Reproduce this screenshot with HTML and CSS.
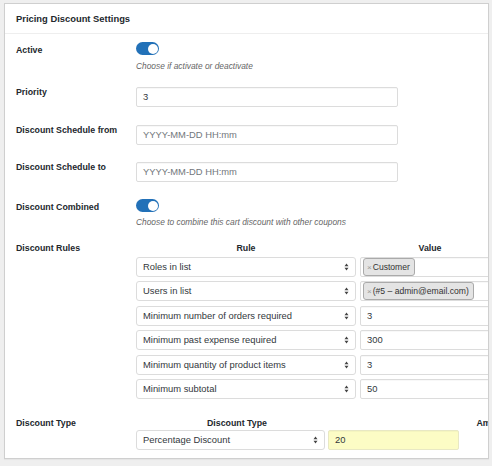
FILE: index.html
```html
<!DOCTYPE html>
<html>
<head>
<meta charset="utf-8">
<link rel="stylesheet" href="styles.css">
</head>
<body>
<div class="panel">
  <div class="panel-head">Pricing Discount Settings</div>
  <div class="panel-body">
    <div class="field f-active">
      <div class="label label-toggle">Active</div>
      <div class="control">
        <span class="toggle"><span class="knob"></span></span>
        <p class="desc">Choose if activate or deactivate</p>
      </div>
    </div>
    <div class="field f-priority">
      <div class="label">Priority</div>
      <div class="control"><div class="input wide">3</div></div>
    </div>
    <div class="field f-from">
      <div class="label">Discount Schedule from</div>
      <div class="control"><div class="input wide placeholder">YYYY-MM-DD HH:mm</div></div>
    </div>
    <div class="field f-to">
      <div class="label">Discount Schedule to</div>
      <div class="control"><div class="input wide placeholder">YYYY-MM-DD HH:mm</div></div>
    </div>
    <div class="field f-combined">
      <div class="label label-toggle">Discount Combined</div>
      <div class="control">
        <span class="toggle"><span class="knob"></span></span>
        <p class="desc desc2">Choose to combine this cart discount with other coupons</p>
      </div>
    </div>
    <div class="field f-rules">
      <div class="label label-head">Discount Rules</div>
      <div class="control">
        <div class="rules">
          <div class="th th-rule">Rule</div>
          <div class="th th-value">Value</div>
          <div class="select">Roles in list<svg class="arrow" width="5" height="8" viewBox="0 0 5 8"><path d="M0.5 3.2 L2.5 0.6 L4.5 3.2 Z M0.5 4.8 L2.5 7.4 L4.5 4.8 Z" fill="#444"/></svg></div>
          <div class="input value"><span class="chip"><span class="x">×</span>Customer</span></div>
          <div class="select">Users in list<svg class="arrow" width="5" height="8" viewBox="0 0 5 8"><path d="M0.5 3.2 L2.5 0.6 L4.5 3.2 Z M0.5 4.8 L2.5 7.4 L4.5 4.8 Z" fill="#444"/></svg></div>
          <div class="input value"><span class="chip"><span class="x">×</span>(#5 – admin@email.com)</span></div>
          <div class="select">Minimum number of orders required<svg class="arrow" width="5" height="8" viewBox="0 0 5 8"><path d="M0.5 3.2 L2.5 0.6 L4.5 3.2 Z M0.5 4.8 L2.5 7.4 L4.5 4.8 Z" fill="#444"/></svg></div>
          <div class="input value">3</div>
          <div class="select">Minimum past expense required<svg class="arrow" width="5" height="8" viewBox="0 0 5 8"><path d="M0.5 3.2 L2.5 0.6 L4.5 3.2 Z M0.5 4.8 L2.5 7.4 L4.5 4.8 Z" fill="#444"/></svg></div>
          <div class="input value">300</div>
          <div class="select">Minimum quantity of product items<svg class="arrow" width="5" height="8" viewBox="0 0 5 8"><path d="M0.5 3.2 L2.5 0.6 L4.5 3.2 Z M0.5 4.8 L2.5 7.4 L4.5 4.8 Z" fill="#444"/></svg></div>
          <div class="input value">3</div>
          <div class="select">Minimum subtotal<svg class="arrow" width="5" height="8" viewBox="0 0 5 8"><path d="M0.5 3.2 L2.5 0.6 L4.5 3.2 Z M0.5 4.8 L2.5 7.4 L4.5 4.8 Z" fill="#444"/></svg></div>
          <div class="input value">50</div>
        </div>
      </div>
    </div>
    <div class="field f-type">
      <div class="label label-head">Discount Type</div>
      <div class="control">
        <div class="type-head">
          <div class="th th-type">Discount Type</div>
          <div class="th th-amount">Amount</div>
        </div>
        <div class="type-row">
          <div class="select select-type">Percentage Discount<svg class="arrow" width="5" height="8" viewBox="0 0 5 8"><path d="M0.5 3.2 L2.5 0.6 L4.5 3.2 Z M0.5 4.8 L2.5 7.4 L4.5 4.8 Z" fill="#444"/></svg></div>
          <div class="input amount">20</div>
        </div>
      </div>
    </div>
  </div>
</div>
</body>
</html>
```

FILE: styles.css
```css
* { box-sizing: border-box; }
html, body { margin: 0; padding: 0; }
body {
  background: #efefef;
  font-family: "Liberation Sans", Arial, sans-serif;
  color: #23282d;
  width: 492px;
  height: 466px;
  overflow: hidden;
  padding: 3px 3px 0 4px;
}
.panel {
  background: #fff;
  border: 1px solid #cfcfcf;
  height: 456px;
  overflow: hidden;
  box-shadow: 0 1px 1px rgba(0,0,0,0.04);
}
.panel-head {
  height: 30px;
  border-bottom: 1px solid #eeeeee;
  padding: 0 11px;
  font-size: 9.4px;
  font-weight: bold;
  line-height: 29px;
  color: #23282d;
}
.panel-body { padding-left: 11px; }
.field {
  display: grid;
  grid-template-columns: 120px 1fr;
}
.label {
  font-size: 8.8px;
  font-weight: bold;
  line-height: 11px;
  color: #23282d;
  white-space: nowrap;
}
.label-toggle { padding-top: 3px; }
.label-head { line-height: 12px; }
.control { min-width: 0; }
.f-active { margin-top: 8px; }
.f-priority { margin-top: 15px; }
.f-from { margin-top: 18px; }
.f-to { margin-top: 17px; }
.f-combined { margin-top: 17px; }
.f-rules { margin-top: 14px; }
.f-type { margin-top: 18px; }

.toggle {
  display: block;
  width: 23px;
  height: 13px;
  border-radius: 7px;
  background: #2271b8;
  position: relative;
}
.knob {
  position: absolute;
  right: 1.5px;
  top: 1.5px;
  width: 10px;
  height: 10px;
  border-radius: 50%;
  background: #fff;
}
.desc {
  margin: 6px 0 0;
  font-size: 8.4px;
  line-height: 11px;
  font-style: italic;
  color: #666;
  white-space: nowrap;
}
.desc2 { margin-top: 5px; }

.input {
  height: 20px;
  border: 1px solid #dcdcdc;
  border-radius: 2px;
  background: #fff;
  font-size: 9.4px;
  line-height: 18px;
  padding: 0 6px;
  color: #32373c;
  white-space: nowrap;
  box-shadow: inset 0 1px 1px rgba(0,0,0,0.03);
}
.wide { width: 262px; }
.placeholder { color: #72777c; }

.rules {
  display: grid;
  grid-template-columns: 220px 140px;
  column-gap: 4px;
  row-gap: 4.4px;
}
.th {
  font-size: 8.8px;
  font-weight: bold;
  line-height: 12px;
  text-align: center;
  color: #23282d;
  white-space: nowrap;
}
.th-rule, .th-value { margin-bottom: -1.4px; }
.select {
  height: 20px;
  border: 1px solid #dcdcdc;
  border-radius: 3px;
  background: #fff;
  font-size: 9.4px;
  line-height: 18px;
  padding: 0 6px;
  color: #32373c;
  display: flex;
  justify-content: space-between;
  align-items: center;
  white-space: nowrap;
}
.arrow { flex: none; }
.value { padding-left: 2px; display: flex; align-items: center; }
.rules .value:nth-child(n+7) { padding-left: 6px; }
.chip {
  display: inline-block;
  height: 18px;
  border: 1px solid #aaa;
  border-radius: 3px;
  background: #e4e4e4;
  font-size: 8.6px;
  line-height: 16px;
  padding: 0 4px 0 3px;
  color: #333;
}
.x { color: #999; font-size: 8px; margin-right: 1px; }

.type-head {
  display: grid;
  grid-template-columns: 202px 310px;
}
.type-row {
  display: flex;
  gap: 3px;
  margin-top: 1px;
}
.select-type { width: 189px; }
.amount {
  width: 131px;
  background: #fcfcc5;
  border-color: #e8e8c4;
}
```
